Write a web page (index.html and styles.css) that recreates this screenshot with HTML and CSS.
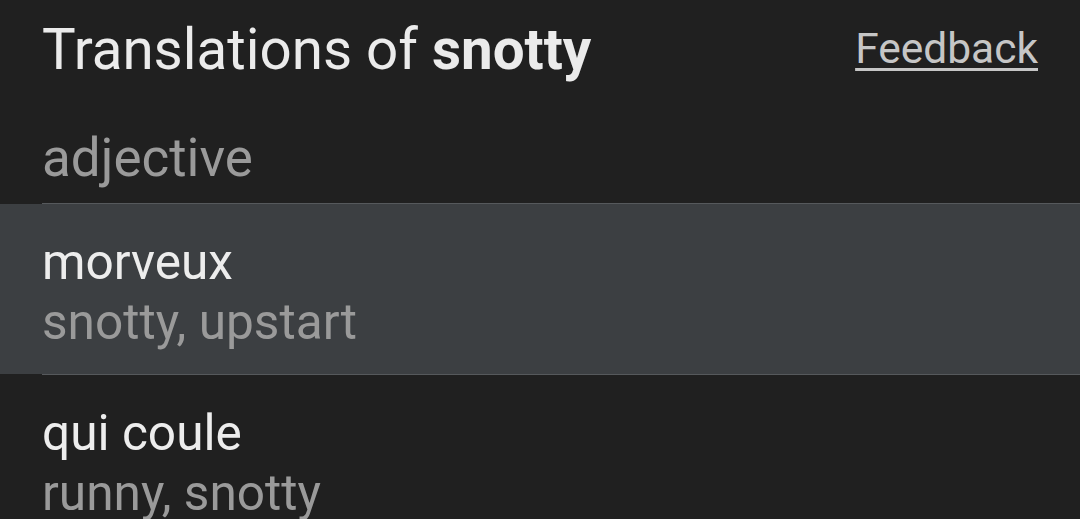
FILE: index.html
```html
<!DOCTYPE html>
<html>

<head>
    <title>Translations of snotty</title>
    <meta name="viewport" content="width=device-width, initial-scale=1">
    <link rel="stylesheet" href="styles.css">
</head>

<body>
    <div class="card">
        <div class="header">
            <h2 class="title">Translations of <b>snotty</b></h2>
            <a class="feedback" href="#">Feedback</a>
        </div>

        <div class="pos">adjective</div>

        <div class="divider"></div>
        <div class="entry active">
            <div class="word">morveux</div>
            <div class="meaning">snotty, upstart</div>
        </div>
        <div class="divider"></div>
        <div class="entry">
            <div class="word">qui coule</div>
            <div class="meaning">runny, snotty</div>
        </div>
    </div>
</body>

</html>
```

FILE: styles.css
```css
body {
    margin: 0;
    padding: 0;
    background-color: #202020;
    font-family: Roboto, "Noto Sans", Arial, sans-serif;
    color: #e8e8e8;
    overflow: hidden;
}

.header {
    display: flex;
    justify-content: space-between;
    align-items: flex-start;
    padding: 0 42px 0 42px;
}

.title {
    margin: 18px 0 0 0;
    font-size: 56.5px;
    line-height: 64px;
    font-weight: normal;
    color: #ebebeb;
}

.title b {
    font-weight: bold;
}

.feedback {
    margin-top: 25px;
    font-size: 42.5px;
    line-height: 48px;
    color: #c6c6c6;
    text-decoration: underline;
    text-decoration-thickness: 3px;
    text-underline-offset: 5px;
}

.pos {
    margin: 46px 0 0 42px;
    font-size: 53px;
    line-height: 60px;
    color: #9a9a9a;
}

.divider {
    height: 1px;
    margin-left: 42px;
    background-color: #56595c;
}

.pos + .divider {
    margin-top: 15px;
}

.entry {
    height: 170px;
    box-sizing: border-box;
    padding: 28px 0 0 42px;
}

.entry.active {
    background-color: #3c3f42;
}

.word {
    font-size: 49.6px;
    line-height: 60px;
    color: #ededed;
}

.meaning {
    font-size: 49.6px;
    line-height: 60px;
    color: #9a9a9a;
}
```
